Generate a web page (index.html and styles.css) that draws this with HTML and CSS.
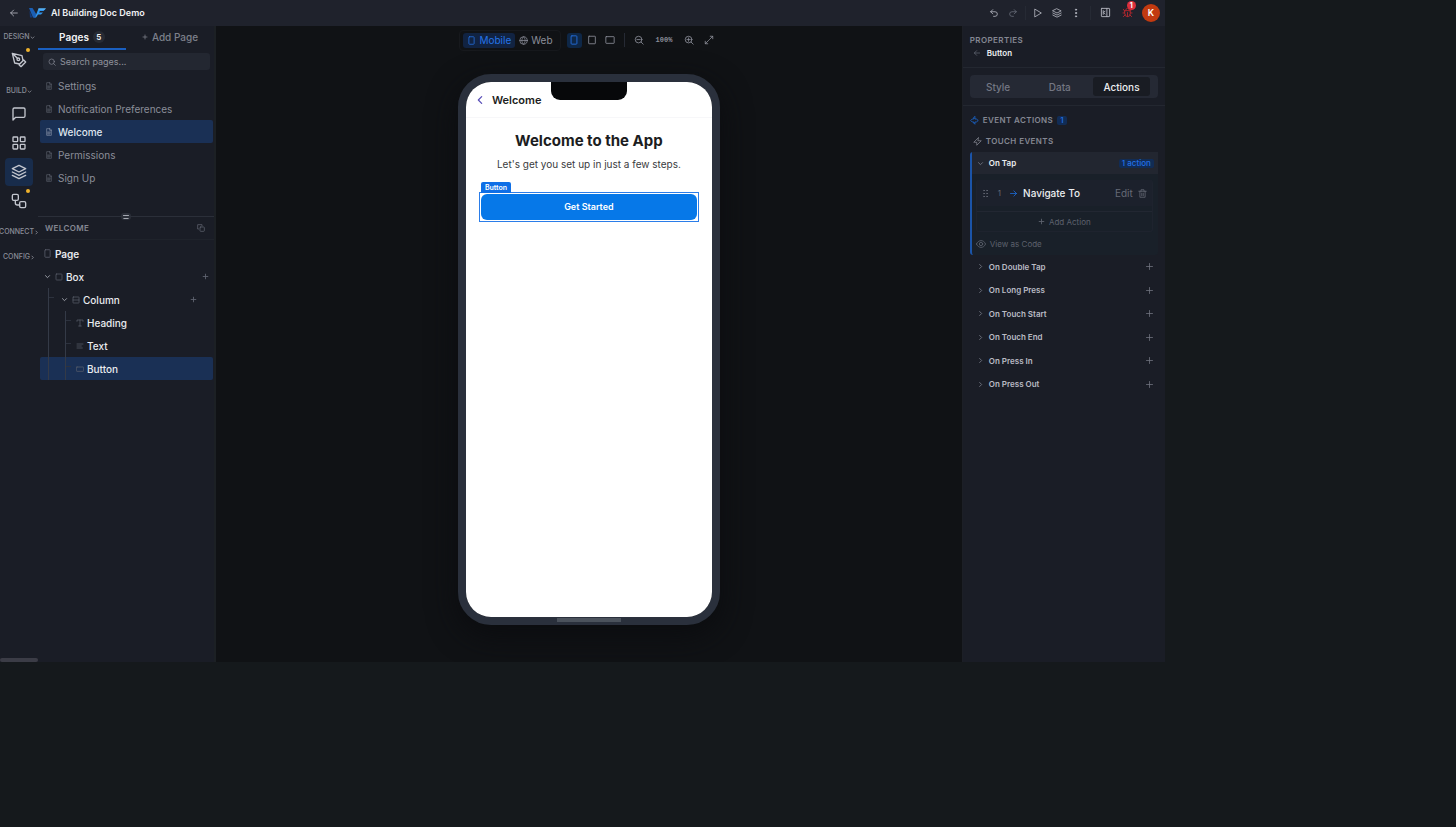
FILE: index.html
```html
<!DOCTYPE html>
<html lang="en">
<head>
<meta charset="utf-8">
<title>AI Building Doc Demo</title>
<link rel="stylesheet" href="styles.css">
</head>
<body>
<svg class="sprite" aria-hidden="true">
  <symbol id="back" viewBox="0 0 24 24"><path d="M20 12H4M11 5l-7 7 7 7"/></symbol>
  <symbol id="right" viewBox="0 0 24 24"><path d="M4 12h16M13 5l7 7-7 7"/></symbol>
  <symbol id="chev-r" viewBox="0 0 24 24"><path d="M9 5l7 7-7 7"/></symbol>
  <symbol id="chev-l" viewBox="0 0 24 24"><path d="M16 4l-8 8 8 8"/></symbol>
  <symbol id="chev-d" viewBox="0 0 24 24"><path d="M5 9l7 7 7-7"/></symbol>
  <symbol id="plus" viewBox="0 0 24 24"><path d="M12 4v16M4 12h16"/></symbol>
  <symbol id="undo" viewBox="0 0 24 24"><path d="M9 14L4 9l5-5M4 9h10.500a5.500 5.500 0 0 1 0 11H11"/></symbol>
  <symbol id="redo" viewBox="0 0 24 24"><path d="M15 14l5-5-5-5M20 9H9.500a5.500 5.500 0 0 0 0 11H13"/></symbol>
  <symbol id="play" viewBox="0 0 24 24"><path d="M5 3l15 9-15 9z"/></symbol>
  <symbol id="layers" viewBox="0 0 24 24"><path d="M12 2l10 5-10 5L2 7zM2 12l10 5 10-5M2 17l10 5 10-5"/></symbol>
  <symbol id="dots" viewBox="0 0 24 24"><g fill="currentColor"><circle cx="12" cy="4" r="1.500"/><circle cx="12" cy="12" r="1.500"/><circle cx="12" cy="20" r="1.500"/></g></symbol>
  <symbol id="panel" viewBox="0 0 24 24"><rect x="3" y="3" width="18" height="18" rx="1"/><path d="M15 3v18M7 8v8M11 9l-3 3 3 3"/></symbol>
  <symbol id="bug" viewBox="0 0 24 24"><path d="M8 7a4 4 0 0 1 8 0M6 8h12v7a6 6 0 0 1-12 0zM12 12v9M2 13h4M18 13h4M3 5l3 4M21 5l-3 4M3 21l4-4M21 21l-4-4"/></symbol>
  <symbol id="pen" viewBox="0 0 24 24"><path d="M12 19l7-7 3 3-7 7zM18 13l-1.500-7.500L2 2l3.500 14.500L13 18zM2 2l7.500 7.500"/><circle cx="11" cy="11" r="2"/></symbol>
  <symbol id="chat" viewBox="0 0 24 24"><path d="M21 15a2 2 0 0 1-2 2H7l-4 4V5a2 2 0 0 1 2-2h14a2 2 0 0 1 2 2z"/></symbol>
  <symbol id="grid" viewBox="0 0 24 24"><rect x="3" y="3" width="7" height="7" rx="1"/><rect x="14" y="3" width="7" height="7" rx="1"/><rect x="3" y="14" width="7" height="7" rx="1"/><rect x="14" y="14" width="7" height="7" rx="1"/></symbol>
  <symbol id="flow" viewBox="0 0 24 24"><rect x="2" y="2" width="9" height="9" rx="2"/><rect x="13" y="13" width="9" height="9" rx="2"/><path d="M6.500 11v4a3 3 0 0 0 3 3H13"/></symbol>
  <symbol id="search" viewBox="0 0 24 24"><circle cx="11" cy="11" r="8"/><path d="M17 17l5 5"/></symbol>
  <symbol id="zout" viewBox="0 0 24 24"><circle cx="11" cy="11" r="8"/><path d="M17 17l5 5M7 11h8"/></symbol>
  <symbol id="zin" viewBox="0 0 24 24"><circle cx="11" cy="11" r="8"/><path d="M17 17l5 5M7 11h8M11 7v8"/></symbol>
  <symbol id="expand" viewBox="0 0 24 24"><path d="M15 3h6v6M9 21H3v-6M21 3l-8 8M3 21l8-8"/></symbol>
  <symbol id="doc" viewBox="0 0 24 24"><path d="M14 2H5v20h14V7zM14 2v5h5M8 12h8M8 15h8M8 18h6"/></symbol>
  <symbol id="copy" viewBox="0 0 24 24"><rect x="9" y="9" width="13" height="13" rx="2"/><path d="M5 15H2V2h13v4"/></symbol>
  <symbol id="phone" viewBox="0 0 24 24"><rect x="5" y="2" width="14" height="20" rx="2"/></symbol>
  <symbol id="tablet" viewBox="0 0 24 24"><rect x="4" y="3" width="16" height="18" rx="1"/></symbol>
  <symbol id="wide" viewBox="0 0 24 24"><rect x="2" y="4" width="20" height="16" rx="1"/></symbol>
  <symbol id="box" viewBox="0 0 24 24"><rect x="3" y="3" width="18" height="18" rx="2"/></symbol>
  <symbol id="col" viewBox="0 0 24 24"><rect x="3" y="3" width="18" height="18" rx="1"/><path d="M3 12h18"/></symbol>
  <symbol id="tee" viewBox="0 0 24 24"><path d="M3 7V3h18v4M12 3v18M8 21h8"/></symbol>
  <symbol id="lines" viewBox="0 0 24 24"><path d="M3 6h18M3 12h13M3 18h16"/></symbol>
  <symbol id="btn" viewBox="0 0 24 24"><rect x="1" y="6" width="22" height="13" rx="2"/></symbol>
  <symbol id="globe" viewBox="0 0 24 24"><circle cx="12" cy="12" r="10"/><path d="M2 12h20M12 2c-6 6-6 14 0 20M12 2c6 6 6 14 0 20"/></symbol>
  <symbol id="event" viewBox="0 0 24 24"><path d="M13 2v6h4l5 4-5 4h-4v6l-3-3v-3H6l-4-4 4-4h4V5z"/></symbol>
  <symbol id="bolt" viewBox="0 0 24 24"><path d="M14 2L2 14h8v8l12-12h-8z"/></symbol>
  <symbol id="grip" viewBox="0 0 24 24"><g fill="currentColor"><circle cx="8" cy="4" r="1"/><circle cx="16" cy="4" r="1"/><circle cx="8" cy="12" r="1"/><circle cx="16" cy="12" r="1"/><circle cx="8" cy="20" r="1"/><circle cx="16" cy="20" r="1"/></g></symbol>
  <symbol id="trash" viewBox="0 0 24 24"><path d="M2 6h20M5 6v16h14V6M8 6V2h8v4M10 11v7M14 11v7"/></symbol>
  <symbol id="eye" viewBox="0 0 24 24"><path d="M1 12c5-11 17-11 22 0-5 11-17 11-22 0z"/><circle cx="12" cy="12" r="4"/></symbol>
</svg>

<div class="app">
  <header class="topbar">
    <button class="icon-btn" aria-label="Back"><svg class="i i10"><use href="#back"/></svg></button>
    <svg class="logo" viewBox="0 0 34 24" aria-hidden="true">
      <path fill="#1b5fb5" d="M0 2h7l8 13-3 7-4-1z"/>
      <path fill="#123a7c" d="M1 7l6 14H2z"/>
      <path fill="#3196ee" d="M12 21l7-18h15l-5 5h-7l-2 3h8l-4 4h-6l-4 6z"/>
      <path fill="#6cc4ff" d="M19 3h15l-3 2H19z"/>
    </svg>
    <h1 class="title">AI Building Doc Demo</h1>
    <nav class="top-actions">
      <button class="icon-btn" aria-label="Undo"><svg class="i i10"><use href="#undo"/></svg></button>
      <button class="icon-btn dim" aria-label="Redo"><svg class="i i10"><use href="#redo"/></svg></button>
      <span class="sep"></span>
      <button class="icon-btn" aria-label="Play"><svg class="i i10"><use href="#play"/></svg></button>
      <button class="icon-btn" aria-label="Layers"><svg class="i i10"><use href="#layers"/></svg></button>
      <button class="icon-btn" aria-label="More"><svg class="i i10"><use href="#dots"/></svg></button>
      <span class="sep"></span>
      <button class="icon-btn" aria-label="Toggle panel"><svg class="i i11"><use href="#panel"/></svg></button>
      <button class="icon-btn issues" aria-label="Issues"><svg class="i i11"><use href="#bug"/></svg><span class="alert">1</span></button>
      <button class="avatar" aria-label="Account">K</button>
    </nav>
  </header>

  <div class="body">
    <nav class="rail">
      <div class="rail-group">
        <button class="rail-label">DESIGN<svg class="i i5"><use href="#chev-d"/></svg></button>
        <button class="rail-btn" aria-label="Design"><svg class="i i16"><use href="#pen"/></svg><span class="dot"></span></button>
      </div>
      <div class="rail-group">
        <button class="rail-label">BUILD<svg class="i i5"><use href="#chev-d"/></svg></button>
        <button class="rail-btn" aria-label="Chat"><svg class="i i16"><use href="#chat"/></svg></button>
        <button class="rail-btn" aria-label="Components"><svg class="i i16"><use href="#grid"/></svg></button>
        <button class="rail-btn on" aria-label="Pages"><svg class="i i16"><use href="#layers"/></svg></button>
        <button class="rail-btn" aria-label="Workflows"><svg class="i i16"><use href="#flow"/></svg><span class="dot"></span></button>
      </div>
      <div class="rail-group"><button class="rail-label">CONNECT<svg class="i i5"><use href="#chev-r"/></svg></button></div>
      <div class="rail-group"><button class="rail-label">CONFIG<svg class="i i5"><use href="#chev-r"/></svg></button></div>
      <span class="scrollbar"></span>
    </nav>

    <aside class="pages">
      <div class="page-tabs">
        <button class="page-tab on">Pages<span class="count">5</span></button>
        <button class="page-tab"><svg class="i i6"><use href="#plus"/></svg>Add Page</button>
      </div>
      <div class="search">
        <svg class="i i8"><use href="#search"/></svg>
        <input type="search" placeholder="Search pages..." aria-label="Search pages">
      </div>
      <ul class="page-list">
        <li><button class="page-row"><svg class="i i8"><use href="#doc"/></svg>Settings</button></li>
        <li><button class="page-row"><svg class="i i8"><use href="#doc"/></svg>Notification Preferences</button></li>
        <li><button class="page-row on"><svg class="i i8"><use href="#doc"/></svg>Welcome</button></li>
        <li><button class="page-row"><svg class="i i8"><use href="#doc"/></svg>Permissions</button></li>
        <li><button class="page-row"><svg class="i i8"><use href="#doc"/></svg>Sign Up</button></li>
      </ul>
      <div class="splitter"><span class="handle"></span></div>
      <div class="tree-head"><h2 class="caps">WELCOME</h2><button class="icon-btn dim" aria-label="Copy"><svg class="i i8"><use href="#copy"/></svg></button></div>
      <ul class="tree">
        <li><div class="node"><svg class="i i9"><use href="#phone"/></svg><span>Page</span></div></li>
        <li>
          <div class="node lvl1"><svg class="i i7 light"><use href="#chev-d"/></svg><svg class="i i8 kind"><use href="#box"/></svg><span>Box</span><button class="add" aria-label="Add to Box"><svg class="i i7"><use href="#plus"/></svg></button></div>
          <ul class="branch outer">
            <li>
              <div class="node lvl2"><svg class="i i7 light"><use href="#chev-d"/></svg><svg class="i i8 kind"><use href="#col"/></svg><span>Column</span><button class="add" aria-label="Add to Column"><svg class="i i7"><use href="#plus"/></svg></button></div>
              <ul class="branch inner">
                <li><div class="node lvl3"><svg class="i i8"><use href="#tee"/></svg><span>Heading</span></div></li>
                <li><div class="node lvl3"><svg class="i i8"><use href="#lines"/></svg><span>Text</span></div></li>
                <li><div class="node lvl3 on"><svg class="i i8"><use href="#btn"/></svg><span>Button</span></div></li>
              </ul>
            </li>
          </ul>
        </li>
      </ul>
    </aside>

    <main class="canvas">
      <div class="toolbar">
        <div class="platforms">
          <button class="platform on"><svg class="i i9"><use href="#phone"/></svg>Mobile</button>
          <button class="platform"><svg class="i i9"><use href="#globe"/></svg>Web</button>
        </div>
        <div class="devices">
          <button class="device on" aria-label="Phone"><svg class="i i10"><use href="#phone"/></svg></button>
          <button class="device" aria-label="Tablet"><svg class="i i10"><use href="#tablet"/></svg></button>
          <button class="device" aria-label="Landscape"><svg class="i i10"><use href="#wide"/></svg></button>
        </div>
        <span class="sep"></span>
        <div class="zoom">
          <button class="icon-btn" aria-label="Zoom out"><svg class="i i10"><use href="#zout"/></svg></button>
          <span class="percent">100%</span>
          <button class="icon-btn" aria-label="Zoom in"><svg class="i i10"><use href="#zin"/></svg></button>
          <button class="icon-btn" aria-label="Fit"><svg class="i i10"><use href="#expand"/></svg></button>
        </div>
      </div>
      <div class="phone">
        <div class="screen">
          <span class="notch"></span>
          <div class="screen-head"><button class="icon-btn violet" aria-label="Go back"><svg class="i i10"><use href="#chev-l"/></svg></button><span>Welcome</span></div>
          <div class="screen-body">
            <h2 class="hero">Welcome to the App</h2>
            <p class="lead">Let's get you set up in just a few steps.</p>
            <div class="selection"><span class="tag">Button</span><button class="cta">Get Started</button></div>
          </div>
        </div>
        <span class="home"></span>
      </div>
    </main>

    <aside class="props">
      <div class="props-head">
        <h2 class="caps">PROPERTIES</h2>
        <div class="crumb"><button class="icon-btn dim" aria-label="Back to parent"><svg class="i i8"><use href="#back"/></svg></button>Button</div>
      </div>
      <div class="tabs-wrap">
        <div class="tabs"><button class="tab">Style</button><button class="tab">Data</button><button class="tab on">Actions</button></div>
      </div>
      <div class="events">
        <h3 class="caps row event-title"><svg class="i i9 blue"><use href="#event"/></svg>EVENT ACTIONS<span class="chip">1</span></h3>
        <h4 class="caps row touch-title"><svg class="i i9"><use href="#bolt"/></svg>TOUCH EVENTS</h4>
        <section class="tap">
          <div class="tap-head"><svg class="i i7"><use href="#chev-d"/></svg><span class="tap-name">On Tap</span><span class="chip">1 action</span></div>
          <div class="tap-body">
            <div class="action"><svg class="i i9"><use href="#grip"/></svg><span class="num">1</span><svg class="i i9 blue"><use href="#right"/></svg><span class="action-name">Navigate To</span><button class="edit">Edit</button><button class="icon-btn dim" aria-label="Delete"><svg class="i i9"><use href="#trash"/></svg></button></div>
            <button class="add-action"><svg class="i i7"><use href="#plus"/></svg>Add Action</button>
          </div>
          <button class="code"><svg class="i i10"><use href="#eye"/></svg>View as Code</button>
        </section>
        <div class="event-list">
          <button class="event"><svg class="i i7"><use href="#chev-r"/></svg><span>On Double Tap</span><svg class="i i9"><use href="#plus"/></svg></button>
          <button class="event"><svg class="i i7"><use href="#chev-r"/></svg><span>On Long Press</span><svg class="i i9"><use href="#plus"/></svg></button>
          <button class="event"><svg class="i i7"><use href="#chev-r"/></svg><span>On Touch Start</span><svg class="i i9"><use href="#plus"/></svg></button>
          <button class="event"><svg class="i i7"><use href="#chev-r"/></svg><span>On Touch End</span><svg class="i i9"><use href="#plus"/></svg></button>
          <button class="event"><svg class="i i7"><use href="#chev-r"/></svg><span>On Press In</span><svg class="i i9"><use href="#plus"/></svg></button>
          <button class="event"><svg class="i i7"><use href="#chev-r"/></svg><span>On Press Out</span><svg class="i i9"><use href="#plus"/></svg></button>
        </div>
      </div>
    </aside>
  </div>
</div>
</body>
</html>
```

FILE: styles.css
```css
* { box-sizing: border-box; margin: 0; padding: 0; }
body { background: #15191c; color: #e4e6eb; font: 10px/12px Inter, "Liberation Sans", sans-serif; }
button, input { font: inherit; color: inherit; background: none; border: 0; outline: 0; }
button { cursor: pointer; }
ul { list-style: none; }
.sprite { position: absolute; width: 0; height: 0; }

.i { fill: none; stroke: currentColor; stroke-width: 2; stroke-linecap: round; stroke-linejoin: round; flex: none; display: block; }
.i5 { width: 5px; height: 5px; stroke-width: 4; }
.i6 { width: 6px; height: 6px; stroke-width: 3; }
.i7 { width: 7px; height: 7px; stroke-width: 3; }
.i8 { width: 8px; height: 8px; }
.i9 { width: 9px; height: 9px; }
.i10 { width: 10px; height: 10px; }
.i11 { width: 11px; height: 11px; }
.i16 { width: 16px; height: 16px; }
.icon-btn { display: flex; align-items: center; justify-content: center; position: relative; }
.dim { color: #686c78; }
.blue { color: #1b6fe0; }
.sep { width: 1px; height: 14px; background: #262a34; }

.app { width: 80vw; height: 80vh; min-height: 640px; display: flex; flex-direction: column; overflow: hidden; }
.topbar { height: 26px; flex: none; display: flex; align-items: center; padding: 0 5px 1px 9px; background: #1f222c; color: #b3b6bf; }
.logo { width: 17px; height: 12px; margin: 0 5px 0 10px; }
.title { font-size: 9px; font-weight: 600; color: #f0f1f4; }
.top-actions { margin-left: auto; display: flex; align-items: center; gap: 9px; }
.top-actions .sep { margin: 0 -2px; }
.top-actions .sep ~ .sep { margin: 0; }
.top-actions .issues { color: #b3262e; margin-left: 2px; }
.alert { position: absolute; left: 5px; top: -6px; width: 9px; height: 9px; border-radius: 5px; background: #dc2f3c; color: #fff; font: 700 7px/9px Inter, sans-serif; text-align: center; }
.avatar { width: 18px; height: 18px; border-radius: 9px; background: #c23a10; color: #fff; font-size: 9px; font-weight: 600; }

.body { flex: 1; min-height: 0; display: flex; background: #1a1d26; }
.rail { width: 38px; flex: none; position: relative; display: flex; flex-direction: column; gap: 11px; padding-top: 5px; }
.rail-group { display: flex; flex-direction: column; align-items: center; gap: 1px; }
.rail-label { display: flex; align-items: center; height: 12px; margin-bottom: 2px; font-size: 7px; font-weight: 500; color: #8b8e99; }
.rail-btn { position: relative; width: 28px; height: 28px; border-radius: 4px; display: grid; place-items: center; color: #c3c6ce; }
.rail-btn.on { background: #182c4b; }
.dot { position: absolute; top: 2px; right: 3px; width: 4px; height: 4px; border-radius: 2px; background: #f0b32c; }
.scrollbar { position: absolute; left: 0; right: 0; bottom: 0; height: 4px; border-radius: 2px; background: #3b3c46; }

.pages { width: 178px; flex: none; border-right: 2px solid #1c2024; }
.page-tabs { display: grid; grid-template-columns: 1fr 1fr; height: 24px; }
.page-tab { display: flex; align-items: center; justify-content: center; gap: 4px; color: #7d808b; font-size: 10px; font-weight: 500; border-bottom: 2px solid transparent; }
.page-tab.on { color: #f2f3f5; font-weight: 600; border-color: #1a5fc0; }
.count { height: 12px; min-width: 12px; border-radius: 6px; background: #272b34; font-size: 8px; }
.search { display: flex; align-items: center; gap: 4px; height: 17px; margin: 3px 4px 4px 5px; padding: 0 5px; background: #232731; border-radius: 3px; color: #878a95; }
.search input { flex: 1; min-width: 0; font-size: 9px; }
.search input::placeholder { color: #8f929c; opacity: 1; }
.page-list { padding: 0 1px 27px 2px; }
.page-row { display: flex; align-items: center; gap: 5px; width: 100%; height: 23px; padding: 0 5px; color: #8b8e99; text-align: left; }
.page-row .i { color: #5c606c; }
.page-row.on { background: #1a3055; color: #dfe4ee; font-weight: 500; border-radius: 2px; }
.page-row.on .i { color: #8893a8; }
.splitter { height: 1px; background: #2b2f39; display: grid; place-items: center; position: relative; }
.handle { position: absolute; width: 10px; height: 7px; border: 1px solid #2b2f39; border-width: 1px 2px; border-radius: 3px; background: radial-gradient(circle, #a4a7b0 1px, #2b2f39 1px) 0 0 / 2px 3px; }
.tree-head { height: 23px; display: flex; align-items: center; justify-content: space-between; padding: 0 9px 0 7px; border-bottom: 1px solid #1f232b; }
.tree { padding: 2px 1px 0 2px; }
.node { height: 23px; display: flex; align-items: center; gap: 3px; padding: 0 4px 0 3px; color: #5f6370; }
.node span { color: #e9ebef; font-weight: 500; }
.node .light { color: #a7aab3; }
.kind { margin-left: 1px; }
.tree > li:first-child span { font-weight: 600; }
.add { margin-left: auto; color: #5f6370; }
.node.lvl1 { padding-left: 4px; }
.node.lvl2 { padding-left: 21px; padding-right: 16px; }
.node.lvl3 { padding-left: 36px; }
.node.on { background-color: #1a3055; border-radius: 2px; }
.branch { position: relative; }
.branch::before { content: ""; position: absolute; z-index: 1; top: 0; bottom: 0; width: 1px; background: #343a47; }
.outer::before { left: 8px; }
.inner::before { left: 25px; }
.lvl2, .lvl3 { background-image: linear-gradient(#2d323e, #2d323e); background-repeat: no-repeat; background-size: 5px 1px; background-position: 9px 9px; }
.lvl3 { background-position: 26px 9px; }

.canvas { flex: 1; min-width: 0; background: #101215; display: flex; flex-direction: column; align-items: center; }
.toolbar { height: 28px; flex: none; display: flex; align-items: center; gap: 6px; padding-right: 4px; color: #8b8e99; }
.platforms { display: flex; align-items: center; padding: 2px 3px; border: 1px solid #17191d; border-radius: 4px; }
.platform { display: flex; align-items: center; gap: 3px; height: 15px; padding: 0 4px; border-radius: 3px; }
.platform.on { background: #112342; color: #2574e8; }
.devices { display: flex; gap: 3px; }
.device { width: 15px; height: 15px; display: grid; place-items: center; border-radius: 3px; }
.device.on { background: #0e2747; color: #2574e8; }
.zoom { display: flex; align-items: center; gap: 10px; padding-left: 3px; }
.percent { font: 700 7px/12px "Liberation Mono", monospace; padding: 0 2px; }
.phone { position: relative; margin-top: 20px; width: 262px; height: 551px; flex: none; border: 8px solid #2a303c; border-radius: 33px; box-shadow: 0 10px 30px #0b0c0f; }
.screen { position: relative; height: 100%; background: #fff; border-radius: 25px; overflow: hidden; color: #1c1d21; }
.notch { position: absolute; top: 0; left: calc(50% - 38px); width: 76px; height: 18px; background: #07080a; border-radius: 0 0 9px 9px; }
.home { position: absolute; left: calc(50% - 32px); bottom: -5px; width: 64px; height: 4px; background: #4b525c; }
.screen-head { display: flex; align-items: center; gap: 7px; height: 36px; padding: 0 9px; border-bottom: 1px solid #f7f7f9; font-size: 11px; font-weight: 600; }
.violet { color: #5a50b8; }
.violet .i { stroke-width: 3; }
.screen-body { padding: 13px 13px; text-align: center; }
.hero { font-size: 15px; line-height: 20px; font-weight: 700; }
.lead { font-size: 10px; line-height: 14px; margin: 6px 0 21px; color: #3a3b40; }
.selection { position: relative; border: 1px solid #2b7de9; padding: 1px; }
.tag { position: absolute; left: 1px; bottom: 28px; height: 11px; padding: 0 4px; background: #0f6fe6; color: #fff; border-radius: 2px 2px 0 0; font-size: 7px; line-height: 11px; font-weight: 600; }
.cta { display: block; width: 100%; height: 26px; border-radius: 6px; background: #0678e8; color: #fff; font-size: 9px; font-weight: 600; }

.props { width: 203px; flex: none; border-left: 1px solid #1c1f26; }
.caps { font-size: 8px; line-height: 12px; font-weight: 600; letter-spacing: 0.05em; color: #858893; }
.row { display: flex; align-items: center; gap: 4px; }
.props-head { padding: 8px 7px 7px; border-bottom: 1px solid #232730; }
.crumb { display: flex; align-items: center; gap: 6px; height: 14px; padding-left: 3px; font-size: 8px; font-weight: 600; color: #eceef1; }
.tabs-wrap { padding: 7px; border-bottom: 1px solid #232730; }
.tabs { display: grid; grid-template-columns: repeat(3, 1fr); gap: 5px; padding: 2px 8px 2px 0; height: 23px; background: #252934; border-radius: 4px; }
.tab { border-radius: 3px; font-weight: 500; color: #747783; }
.tab.on { background: #191c23; color: #eceef1; }
.events { padding: 8px 7px; }
.chip { padding: 0 3px; background: #112c55; color: #2371e6; border-radius: 2px; font-size: 8px; line-height: 9px; font-weight: 500; letter-spacing: 0; }
.touch-title { margin: 9px 0 5px; padding-left: 3px; }
.tap { border-left: 2px solid #1b54a8; border-radius: 3px; background: #192029; }
.tap-head { display: flex; align-items: center; gap: 5px; height: 22px; padding: 0 4px 0 5px; background: #222630; color: #747783; font-size: 8px; }
.tap-name { flex: 1; color: #eceef1; font-weight: 600; }
.tap-body { margin: 6px 5px 0 4px; border: 1px solid #1e232e; border-top: 0; border-radius: 3px; }
.action { display: flex; align-items: center; gap: 5px; height: 26px; padding: 0 5px 0 4px; background: #1c212c; color: #666a76; }
.num { font-size: 8px; padding: 0 3px; }
.action-name { flex: 1; color: #eceef1; font-weight: 500; }
.add-action { display: flex; align-items: center; justify-content: center; gap: 4px; width: 100%; height: 20px; margin-top: 5px; border-top: 1px solid #222732; color: #5d616d; font-size: 8px; }
.code { display: flex; align-items: center; gap: 4px; height: 23px; padding-left: 4px; color: #5d616d; font-size: 8px; }
.event-list { display: grid; grid-auto-rows: 23px 24px; }
.event { display: flex; align-items: center; gap: 5px; padding: 0 4px 0 7px; color: #747783; font-size: 8px; text-align: left; }
.event span { flex: 1; font-weight: 600; color: #b9bbc4; }
```
